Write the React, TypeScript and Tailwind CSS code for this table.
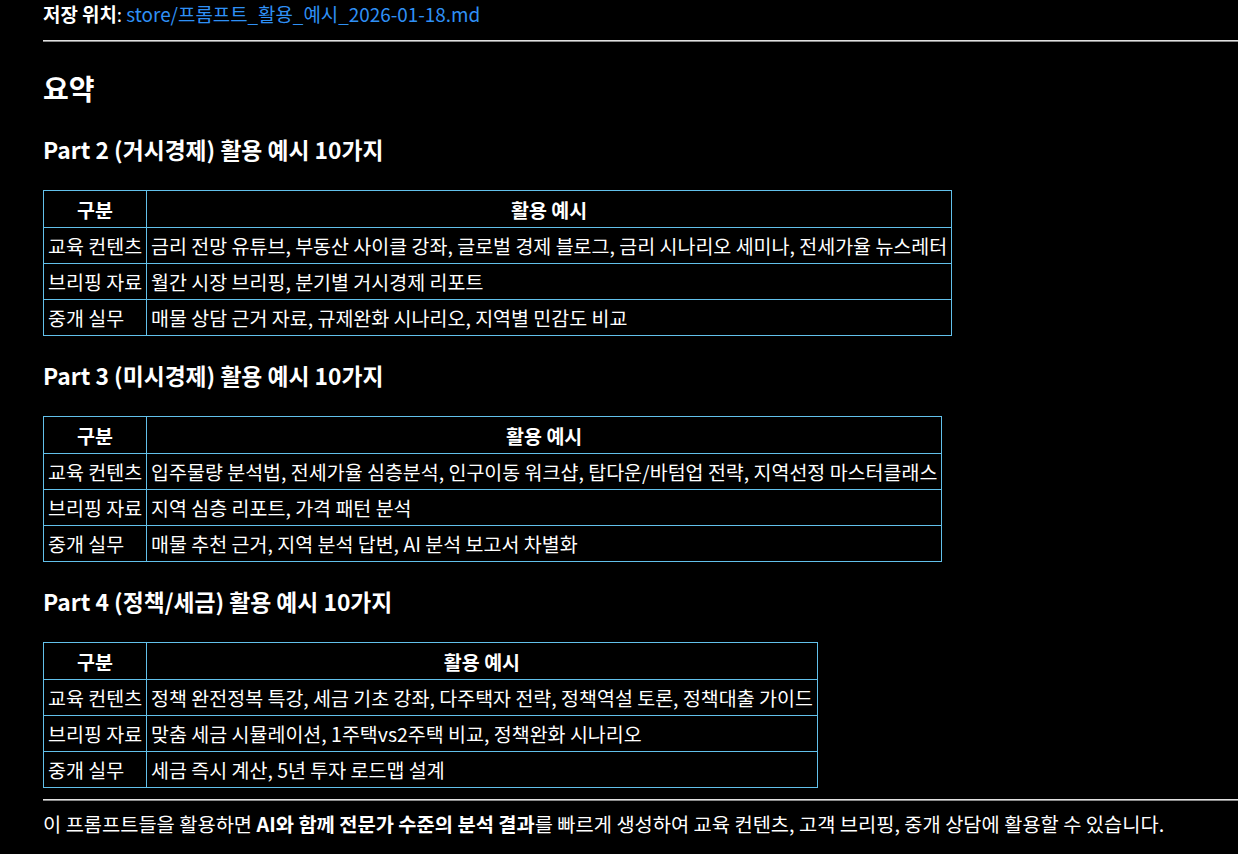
import React from "react";

type Row = [string, string];

const tables: { title: string; rows: Row[] }[] = [
  {
    title: "Part 2 (거시경제) 활용 예시 10가지",
    rows: [
      ["교육 컨텐츠", "금리 전망 유튜브, 부동산 사이클 강좌, 글로벌 경제 블로그, 금리 시나리오 세미나, 전세가율 뉴스레터"],
      ["브리핑 자료", "월간 시장 브리핑, 분기별 거시경제 리포트"],
      ["중개 실무", "매물 상담 근거 자료, 규제완화 시나리오, 지역별 민감도 비교"],
    ],
  },
  {
    title: "Part 3 (미시경제) 활용 예시 10가지",
    rows: [
      ["교육 컨텐츠", "입주물량 분석법, 전세가율 심층분석, 인구이동 워크샵, 탑다운/바텀업 전략, 지역선정 마스터클래스"],
      ["브리핑 자료", "지역 심층 리포트, 가격 패턴 분석"],
      ["중개 실무", "매물 추천 근거, 지역 분석 답변, AI 분석 보고서 차별화"],
    ],
  },
  {
    title: "Part 4 (정책/세금) 활용 예시 10가지",
    rows: [
      ["교육 컨텐츠", "정책 완전정복 특강, 세금 기초 강좌, 다주택자 전략, 정책역설 토론, 정책대출 가이드"],
      ["브리핑 자료", "맞춤 세금 시뮬레이션, 1주택vs2주택 비교, 정책완화 시나리오"],
      ["중개 실무", "세금 즉시 계산, 5년 투자 로드맵 설계"],
    ],
  },
];

function Table({ rows }: { rows: Row[] }) {
  const cell = "border border-[#62c0ea] px-[4px] leading-[27px] whitespace-nowrap";
  return (
    <table className="border-collapse text-[19.5px]">
      <thead>
        <tr>
          <th className={`${cell} pt-[5px] pb-[4px] text-center font-bold`}>구분</th>
          <th className={`${cell} pt-[5px] pb-[4px] text-center font-bold`}>활용 예시</th>
        </tr>
      </thead>
      <tbody>
        {rows.map((r) => (
          <tr key={r[0]}>
            <td className={`${cell} py-[4px] text-left`}>{r[0]}</td>
            <td className={`${cell} py-[4px] text-left`}>{r[1]}</td>
          </tr>
        ))}
      </tbody>
    </table>
  );
}

export default function App() {
  return (
    <div
      className="min-h-[854px] w-full bg-black text-white text-[18px] overflow-hidden"
      style={{ fontFamily: '"Noto Sans CJK KR", "Noto Sans", sans-serif' }}
    >
      <div className="pl-[43px]">
        <div className="h-[28px] leading-[28px] whitespace-nowrap text-[18.9px]">
          <span className="font-bold">저장 위치</span>:{" "}
          <span className="text-[#2f90f5]">store/프롬프트_활용_예시_2026-01-18.md</span>
        </div>
        <div className="mt-[12px] h-[2px] bg-[#8a8a8a] border-t border-[#e0e0e0]" />
        <h2 className="mt-[28px] text-[28px] font-bold leading-[36px]">요약</h2>
        {tables.map((t, i) => (
          <div key={t.title}>
            <h3 className={`${i === 0 ? "mt-[29px]" : "mt-[25px]"} text-[22.8px] font-bold leading-[30px] whitespace-nowrap`}>
              {t.title}
            </h3>
            <div className="mt-[25px]">
              <Table rows={t.rows} />
            </div>
          </div>
        ))}
        <div className="mt-[11px] h-[2px] bg-[#8a8a8a] border-t border-[#e0e0e0]" />
        <p className="mt-[9px] leading-[28px] whitespace-nowrap text-[19.8px]">
          이 프롬프트들을 활용하면 <span className="font-bold">AI와 함께 전문가 수준의 분석 결과</span>를 빠르게 생성하여 교육 컨텐츠, 고객 브리핑, 중개 상담에 활용할 수 있습니다.
        </p>
      </div>
    </div>
  );
}
